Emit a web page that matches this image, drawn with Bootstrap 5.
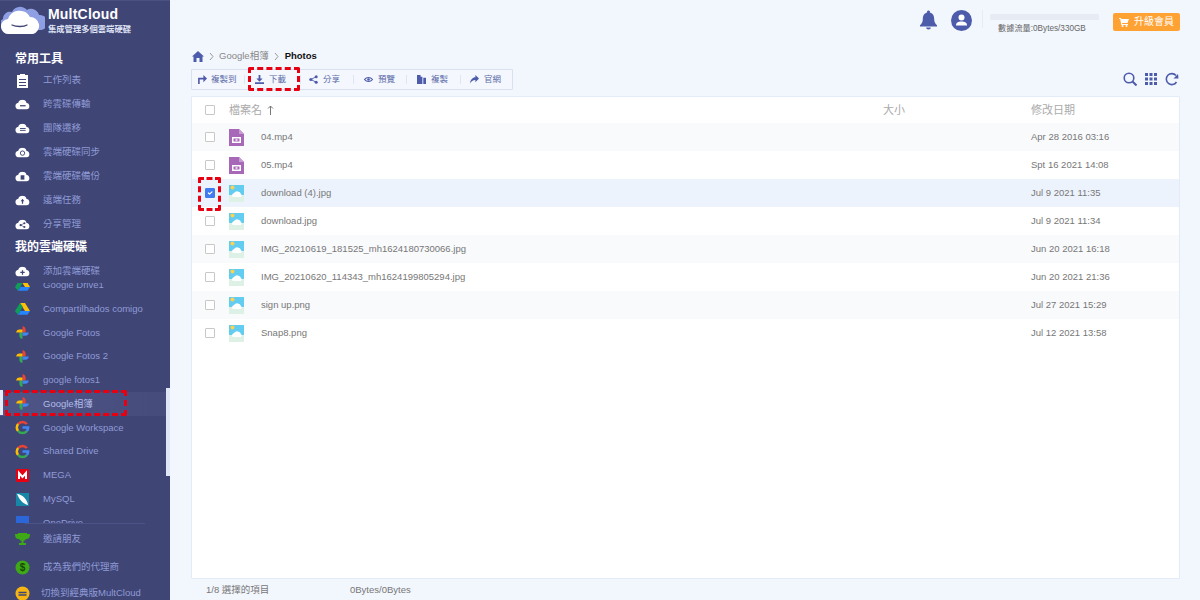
<!DOCTYPE html>
<html lang="zh-Hant">
<head>
<meta charset="utf-8">
<title>MultCloud</title>
<link href="https://cdn.jsdelivr.net/npm/bootstrap@5.3.0/dist/css/bootstrap.min.css" rel="stylesheet">
<style>
html,body{height:100%;overflow:hidden}
body{font-family:"Liberation Sans","Noto Sans CJK TC",sans-serif;background:#f2f6fd;font-size:9.5px;color:#666}
.shell{width:1200px;height:600px}
.side{width:170px;height:600px;overflow:hidden;background:#3f4575;color:#8f9bd6;flex:none;border-top:1px solid #4a5183}
.side>*{flex:none}
.brand{height:46px;padding:5px 0 0 1px;gap:3px}
.brand-name{font-size:14px;font-weight:700;color:#fff;line-height:17px;letter-spacing:.2px}
.brand-sub{font-size:8.3px;font-weight:700;color:#dfe3f5;line-height:11px;margin-top:1px;white-space:nowrap}
.side-head{font-size:12px;font-weight:700;color:#fff;padding-left:15px}
.head-a{height:21px;padding-top:3px;line-height:18px}
.head-b{height:23px;line-height:22px}
.side-item{height:24px;padding-left:15px;gap:13px;font-size:9.5px;line-height:24px;color:#8f9bd6;white-space:nowrap;position:relative}
.side-ico{width:15px;height:15px;flex:none;display:block}
.drives{height:240px;overflow:hidden;position:relative}
.drive-list{margin-top:-10px}
.drive-list .side-item{height:23.8px}
.item-on{background:linear-gradient(90deg,#4f5687,#454b7b);color:#b3bcea}
.edge-strip{position:absolute;left:0;top:107px;width:3px;height:25px;background:#e6ebf8;z-index:3}
.side-thumb{position:absolute;right:0;top:105px;width:4px;height:88px;background:#dfe6f7;z-index:3}
.side-sep{height:1px;background:#4c5487;margin:0 25px}
.side-foot{padding-top:1px}
.side-foot .side-item{height:28px;line-height:28px}
.side-foot .foot-last{height:20px;line-height:20px;padding-top:4px;gap:11px}
.main{flex:1;min-width:0;padding:0 20px 0 21px}
.topbar{height:42px;padding-top:10px;flex:none}
.bell{width:17px;height:20px;color:#4d5bab;margin-right:14px;flex:none}
.avatar{width:21px;height:21px;color:#4d5bab;margin-right:10px;flex:none}
.vsep{width:1px;height:18px;background:#e6ebf5;margin-right:7px}
.usage{width:109px;margin-right:14px;font-size:8.2px;line-height:11px;color:#666}
.usage-track{height:6px;background:#e7ecf4;margin:4px 0 3px;border-radius:1px}
.upgrade{width:67px;height:18px;background:#ffa234;color:#fff;font-size:10px;line-height:18px;border-radius:2px;gap:5px;margin-top:3px}
.crumbs{height:27px;flex:none;gap:5px;font-size:9.5px;color:#888;padding:2px 0 0 1px}
.crumbs b{color:#111;font-weight:700}
.crumb-last{margin-left:1px}
.tools-row{height:27px;flex:none;align-items:flex-start}
.tools{height:21px;width:322px;border:1px solid #d9e1f1;background:#f4f7fd;border-radius:1px}
.tool{height:19px;color:#5a6aa8;font-size:8.5px;line-height:19px;gap:5px;position:relative;white-space:nowrap}
.tool+.tool::before{content:"";position:absolute;left:0;top:5px;height:9px;width:1px;background:#dfe5f2}
.t1{width:52px;padding-left:6px;gap:4px}
.t2{width:56px;padding-left:11px}
.t3{width:53px;padding-left:9px}
.t4{width:53px;padding-left:11px}
.t5{width:54px;padding-left:11px}
.t6{width:52px;padding-left:10px}
.tool-ico{width:9px;height:9px;flex:none}
.view-ico{width:14px;height:14px;color:#4d5bab}
.view-set{gap:7px;margin-top:3px;padding-right:1px}
.panel{height:483px;flex:none;background:#fff;border:1px solid #e3eaf8;border-radius:1px}
.rowx{height:28px;align-items:center}
.rowx.zebra{background:#f9fafc}
.rowx.picked{background:#edf3fd}
.rowx.headx{height:26px;font-size:11px;color:#aaa}
.form-check-input.chk{width:10px;height:10px;border:1px solid #c8c8c8;background-color:#fff;margin:0 0 0 13px;flex:none;position:relative}
.form-check-input.chk[type=checkbox]{border-radius:1px}
.form-check-input.chk:checked{background-color:#3f7cf0;border-color:#3f7cf0}
.file-ico{width:15px;height:17px;flex:none;margin-left:14px}
.cell-size{width:148px;flex:none;font-size:11px;color:#aaa}
.cell-date{font-size:9.5px;color:#777;white-space:nowrap;padding-top:1px}
.headx .cell-date{font-size:11px;color:#aaa;padding-top:0}
.head-name{width:654px;flex:none;margin-left:14px;gap:5px}
.name-wide{width:639px;flex:none;font-size:9.5px;color:#777;padding:1px 0 0 17px;white-space:nowrap}
.statusx{height:21px;flex:none;font-size:9.5px;color:#777;line-height:21px;padding-left:15px}
.statusx span:first-child{width:144px}
.mark-box{position:absolute;border:3px dashed #e60012;border-radius:2px;z-index:5;pointer-events:none}
.mb-item{left:5px;top:-2px;width:122px;height:26px}
.mb-tool{left:4px;top:-3px;width:52px;height:24px}
.mb-chk{left:6px;top:-2px;width:23px;height:34px}
.rel{position:relative}
</style>
</head>
<body>
<svg width="0" height="0" class="position-absolute">
<defs>
<symbol id="cloud" viewBox="0 0 24 16"><path fill="#fff" d="M6 16A5.500 5.500 0 0 1 5.200 5.100 7 7 0 0 1 18.500 5.700 5.200 5.200 0 0 1 18.500 16Z"/></symbol>
<symbol id="photos" viewBox="0 0 24 24"><path fill="#ea4335" d="M12 2c3 0 5 2.200 5 5v5h-5Z"/><path fill="#4285f4" d="M22 12c0 3-2.200 5-5 5h-5v-5Z"/><path fill="#34a853" d="M12 22c-3 0-5-2.200-5-5v-5h5Z"/><path fill="#fbbc04" d="M2 12c0-3 2.200-5 5-5h5v5Z"/></symbol>
<symbol id="drive" viewBox="0 0 24 22"><path fill="#ffc107" d="M8 2h8l8 13h-8Z"/><path fill="#2684fc" d="M4.500 21 8.500 15H24l-4 6Z"/><path fill="#0f9d58" d="M8 2 0 15l4.500 6 8-13Z"/></symbol>
<symbol id="gg" viewBox="0 0 24 24"><path fill="none" stroke="#ea4335" stroke-width="4" d="M19 6.500A9 9 0 0 0 5 6.500"/><path fill="none" stroke="#fbbc04" stroke-width="4" d="M5 6.500a9 9 0 0 0 0 11"/><path fill="none" stroke="#34a853" stroke-width="4" d="M5 17.500a9 9 0 0 0 14 0"/><path fill="none" stroke="#4285f4" stroke-width="4" d="M19 17.500A9 9 0 0 0 21 12H12"/></symbol>
<symbol id="img" viewBox="0 0 15 17"><rect width="15" height="17" fill="#def1e6"/><path fill="#62cdf0" d="M0 0h15v10H0Z"/><circle cx="3.500" cy="2.500" r="2" fill="#fbd34e"/><path fill="#fff" d="M3 11a3 3 0 0 1 2-3 4 4 0 0 1 7 1 2 2 0 0 1 0 3H4Z"/><path fill="#def1e6" d="M0 12 15 13v4H0Z"/></symbol>
<symbol id="vid" viewBox="0 0 15 17"><path fill="#a868b8" d="M0 0h10l5 5v12H0Z"/><path fill="#c99bd4" d="M10 0l5 5h-5Z"/><rect x="3" y="8" width="9" height="6" fill="#fff"/><rect x="4.500" y="9.500" width="6" height="3" fill="#a868b8"/><rect x="6.500" y="10.300" width="2" height="1.400" fill="#fff"/></symbol>
<symbol id="chev" viewBox="0 0 5 9"><path fill="none" stroke="#999" d="M1 1l3 3.500L1 8"/></symbol>
</defs>
</svg>
<div class="shell d-flex">
  <aside class="side d-flex flex-column">
    <div class="brand d-flex">
      <svg width="44" height="30" viewBox="0 0 44 30" class="flex-none"><path fill="#8f9fe4" d="M3 24a6 6 0 0 1-1-11 7 7 0 0 1 9-7 9 9 0 0 1 15-2 8 8 0 0 1 12 5 7 7 0 0 1 2 15Z"/><path fill="#fff" d="M8 28a7.500 7.500 0 0 1-1-15A12 12 0 0 1 29 11a8.700 8.700 0 0 1 3 17Z"/><path fill="none" stroke="#3f4575" stroke-width="1.300" stroke-linecap="round" d="M11 19c4 2 12 2 15 0"/></svg>
      <div><div class="brand-name">MultCloud</div><div class="brand-sub">集成管理多個雲端硬碟</div></div>
    </div>
    <div class="side-head head-a">常用工具</div>
    <div class="side-item d-flex align-items-center"><svg class="side-ico" viewBox="0 0 15 15"><path fill="#fff" d="M2 2h3V1h5v1h3v13H2Zm2 4v1h7V6Zm0 3v1h7V9Zm0 3v1h7v-1Z"/></svg>工作列表</div>
    <div class="side-item d-flex align-items-center"><svg class="side-ico" viewBox="0 0 24 16"><use href="#cloud"/><path stroke="#3f4575" stroke-width="2" d="M8 10h9"/></svg>跨雲碟傳輸</div>
    <div class="side-item d-flex align-items-center"><svg class="side-ico" viewBox="0 0 24 16"><use href="#cloud"/><path stroke="#3f4575" stroke-width="1.500" d="M8 8h9M8 11h9"/></svg>團隊遷移</div>
    <div class="side-item d-flex align-items-center"><svg class="side-ico" viewBox="0 0 24 16"><use href="#cloud"/><circle cx="12" cy="9" r="3.500" fill="none" stroke="#3f4575" stroke-width="1.500"/></svg>雲端硬碟同步</div>
    <div class="side-item d-flex align-items-center"><svg class="side-ico" viewBox="0 0 24 16"><use href="#cloud"/><rect x="9" y="6" width="6" height="7" fill="#3f4575"/></svg>雲端硬碟備份</div>
    <div class="side-item d-flex align-items-center"><svg class="side-ico" viewBox="0 0 24 16"><use href="#cloud"/><path fill="#3f4575" d="M12 5l3 4h-2v4h-2V9H9Z"/></svg>遠端任務</div>
    <div class="side-item d-flex align-items-center"><svg class="side-ico" viewBox="0 0 24 16"><use href="#cloud"/><g fill="#3f4575"><circle cx="9" cy="9" r="1.700"/><circle cx="15" cy="6" r="1.700"/><circle cx="15" cy="12" r="1.700"/></g><path stroke="#3f4575" d="M15 6 9 9l6 3" fill="none"/></svg>分享管理</div>
    <div class="side-head head-b">我的雲端硬碟</div>
    <div class="side-item d-flex align-items-center"><svg class="side-ico" viewBox="0 0 24 16"><use href="#cloud"/><path stroke="#3f4575" stroke-width="2" d="M12 6v7M8.500 9.500h7"/></svg>添加雲端硬碟</div>
    <div class="drives">
      <div class="side-thumb"></div>
      <div class="edge-strip"></div>
      <div class="drive-list">
        <div class="side-item d-flex align-items-center"><svg class="side-ico"><use href="#drive"/></svg>Google Drive1</div>
        <div class="side-item d-flex align-items-center"><svg class="side-ico"><use href="#drive"/></svg>Compartilhados comigo</div>
        <div class="side-item d-flex align-items-center"><svg class="side-ico"><use href="#photos"/></svg>Google Fotos</div>
        <div class="side-item d-flex align-items-center"><svg class="side-ico"><use href="#photos"/></svg>Google Fotos 2</div>
        <div class="side-item d-flex align-items-center"><svg class="side-ico"><use href="#photos"/></svg>google fotos1</div>
        <div class="side-item item-on d-flex align-items-center"><svg class="side-ico"><use href="#photos"/></svg>Google相簿<span class="mark-box mb-item"></span></div>
        <div class="side-item d-flex align-items-center"><svg class="side-ico"><use href="#gg"/></svg>Google Workspace</div>
        <div class="side-item d-flex align-items-center"><svg class="side-ico"><use href="#gg"/></svg>Shared Drive</div>
        <div class="side-item d-flex align-items-center"><svg class="side-ico" viewBox="0 0 15 15"><rect width="13" height="13" x="1" y="1" rx="1" fill="#e60012"/><path fill="none" stroke="#fff" stroke-width="2" d="M4 11V5l3.500 4L11 5v6"/></svg>MEGA</div>
        <div class="side-item d-flex align-items-center"><svg class="side-ico" viewBox="0 0 15 15"><rect width="13" height="13" x="1" y="1" fill="#1787a8"/><path fill="#fff" d="M2 2c5 0 10 5 11 11C8 12 4 7 2 2Z"/></svg>MySQL</div>
        <div class="side-item d-flex align-items-center"><svg class="side-ico" viewBox="0 0 15 15"><rect width="13" height="13" x="1" y="1" fill="#2b67d8"/></svg>OneDrive</div>
      </div>
    </div>
    <div class="side-sep"></div>
    <div class="side-foot">
      <div class="side-item d-flex align-items-center"><svg class="side-ico" viewBox="0 0 15 15"><path fill="#3ea816" d="M3 1h9v1h3c0 3-1 5-4 5a4 4 0 0 1-2.500 2v2H11v2H4v-2h2.500V9A4 4 0 0 1 4 7C1 7 0 5 0 2h3Z"/></svg>邀請朋友</div>
      <div class="side-item d-flex align-items-center"><svg class="side-ico" viewBox="0 0 15 15"><circle cx="7.500" cy="7.500" r="7" fill="#3ea816"/><text x="7.500" y="11" font-size="10" font-weight="700" text-anchor="middle" fill="#17470a">$</text></svg>成為我們的代理商</div>
      <div class="side-item foot-last d-flex align-items-center"><svg class="side-ico" viewBox="0 0 15 15"><circle cx="7.500" cy="7.500" r="7" fill="#f7b512"/><path fill="none" stroke="#3f4575" stroke-width="1.500" d="M3.500 6.500h8M3.500 9h8"/></svg>切換到經典版MultCloud</div>
    </div>
  </aside>
  <main class="main d-flex flex-column">
    <div class="topbar d-flex justify-content-end align-items-start">
      <svg class="bell" viewBox="0 0 18 20"><path fill="currentColor" d="M9 0a1.500 1.500 0 0 1 1.500 2C14 3 15 6 15 9c0 3 1 5 3 6.500V17H0v-1.500C2 14 3 12 3 9c0-3 1-6 4.500-7A1.500 1.500 0 0 1 9 0ZM6.500 18h5a2.500 2 0 0 1-5 0Z"/></svg>
      <svg class="avatar" viewBox="0 0 21 21"><circle cx="10.500" cy="10.500" r="10.500" fill="currentColor"/><circle cx="10.500" cy="7.500" r="3" fill="#fff"/><path fill="#fff" d="M5 15.500c0-3 2-4 5.500-4s5.500 1 5.500 4Z"/></svg>
      <div class="vsep"></div>
      <div class="usage"><div class="usage-track"></div><div class="ps-2">數據流量:0Bytes/330GB</div></div>
      <div class="upgrade d-flex justify-content-center align-items-center"><svg width="10" height="10" viewBox="0 0 10 10"><path fill="#fff" d="M0 1h2l.4 1H10L8.500 6H3l.2 1H9v1H2.300L1.200 2H0Z"/><circle cx="3.500" cy="9" r="1" fill="#fff"/><circle cx="7.500" cy="9" r="1" fill="#fff"/></svg>升級會員</div>
    </div>
    <div class="crumbs d-flex align-items-center">
      <svg width="12" height="11" viewBox="0 0 12 11"><path fill="#4d5bab" d="M6 0l6 5.500h-1.500V11H7.500V7h-3v4H1.500V5.500H0Z"/></svg>
      <svg width="5" height="9"><use href="#chev"/></svg><span>Google相簿</span>
      <svg width="5" height="9"><use href="#chev"/></svg><b class="crumb-last">Photos</b>
    </div>
    <div class="tools-row d-flex justify-content-between">
      <div class="tools d-flex">
        <div class="tool t1 d-flex align-items-center"><svg class="tool-ico" viewBox="0 0 10 10"><path fill="none" stroke="#4d5bab" stroke-width="1.800" d="M1 10V4h6"/><path fill="#4d5bab" d="M6 0l4 4-4 4Z"/></svg>複製到</div>
        <div class="tool t2 d-flex align-items-center rel"><svg class="tool-ico" viewBox="0 0 10 10"><path fill="#4d5bab" d="M4 0h2v4h2.500L5 7.500 1.500 4H4ZM0 8h10v2H0Z"/></svg>下載<span class="mark-box mb-tool"></span></div>
        <div class="tool t3 d-flex align-items-center"><svg class="tool-ico" viewBox="0 0 10 10"><g fill="#4d5bab"><circle cx="2" cy="5" r="1.700"/><circle cx="8" cy="2" r="1.700"/><circle cx="8" cy="8" r="1.700"/></g><path stroke="#4d5bab" fill="none" d="M8 2 2 5l6 3"/></svg>分享</div>
        <div class="tool t4 d-flex align-items-center"><svg class="tool-ico" viewBox="0 0 10 10"><path fill="none" stroke="#4d5bab" stroke-width="1.300" d="M.5 5C3 2 7 2 9.500 5 7 8 3 8 .5 5Z"/><circle cx="5" cy="5" r="1.400" fill="#4d5bab"/></svg>預覽</div>
        <div class="tool t5 d-flex align-items-center"><svg class="tool-ico" viewBox="0 0 10 10"><path fill="#4d5bab" d="M0 0h4v2h2v8H0Zm7 3h3v7H7Z"/></svg>複製</div>
        <div class="tool t6 d-flex align-items-center"><svg class="tool-ico" viewBox="0 0 10 10"><path fill="#4d5bab" d="M6 0l4 4-4 4V5.500C3 5.500 1.500 7 0 9.500 .5 5 3 2.500 6 2.500Z"/></svg>官網</div>
      </div>
      <div class="view-set d-flex">
        <svg class="view-ico" viewBox="0 0 14 14"><circle cx="6" cy="6" r="4.800" fill="none" stroke="currentColor" stroke-width="1.600"/><path stroke="currentColor" stroke-width="2" d="M9.500 9.500 13.500 13.500"/></svg>
        <svg class="view-ico" viewBox="0 0 14 14"><g fill="currentColor"><rect x="1" y="1" width="3" height="3"/><rect x="5.500" y="1" width="3" height="3"/><rect x="10" y="1" width="3" height="3"/><rect x="1" y="5.500" width="3" height="3"/><rect x="5.500" y="5.500" width="3" height="3"/><rect x="10" y="5.500" width="3" height="3"/><rect x="1" y="10" width="3" height="3"/><rect x="5.500" y="10" width="3" height="3"/><rect x="10" y="10" width="3" height="3"/></g></svg>
        <svg class="view-ico" viewBox="0 0 14 14"><path fill="none" stroke="currentColor" stroke-width="1.600" d="M11.500 10A5.500 5.500 0 1 1 11 3.500"/><path fill="currentColor" d="M13.500 6.500H8.500L13 2Z"/></svg>
      </div>
    </div>
    <section class="panel">
      <div class="rowx headx d-flex"><input class="form-check-input chk" type="checkbox" aria-label="all"><div class="head-name d-flex align-items-center">檔案名<svg width="7" height="10" viewBox="0 0 7 10"><path fill="none" stroke="#777" d="M3.500 10V1M1 3.500 3.500 1 6 3.500"/></svg></div><div class="cell-size">大小</div><div class="cell-date">修改日期</div></div>
      <div class="rowx zebra d-flex"><input class="form-check-input chk" type="checkbox" aria-label="row"><svg class="file-ico"><use href="#vid"/></svg><div class="name-wide">04.mp4</div><div class="cell-size"></div><div class="cell-date">Apr 28 2016 03:16</div></div>
      <div class="rowx d-flex"><input class="form-check-input chk" type="checkbox" aria-label="row"><svg class="file-ico"><use href="#vid"/></svg><div class="name-wide">05.mp4</div><div class="cell-size"></div><div class="cell-date">Spt 16 2021 14:08</div></div>
      <div class="rowx picked d-flex rel"><span class="mark-box mb-chk"></span><input class="form-check-input chk" type="checkbox" checked aria-label="row"><svg class="file-ico"><use href="#img"/></svg><div class="name-wide">download (4).jpg</div><div class="cell-size"></div><div class="cell-date">Jul 9 2021 11:35</div></div>
      <div class="rowx d-flex"><input class="form-check-input chk" type="checkbox" aria-label="row"><svg class="file-ico"><use href="#img"/></svg><div class="name-wide">download.jpg</div><div class="cell-size"></div><div class="cell-date">Jul 9 2021 11:34</div></div>
      <div class="rowx zebra d-flex"><input class="form-check-input chk" type="checkbox" aria-label="row"><svg class="file-ico"><use href="#img"/></svg><div class="name-wide">IMG_20210619_181525_mh1624180730066.jpg</div><div class="cell-size"></div><div class="cell-date">Jun 20 2021 16:18</div></div>
      <div class="rowx d-flex"><input class="form-check-input chk" type="checkbox" aria-label="row"><svg class="file-ico"><use href="#img"/></svg><div class="name-wide">IMG_20210620_114343_mh1624199805294.jpg</div><div class="cell-size"></div><div class="cell-date">Jun 20 2021 21:36</div></div>
      <div class="rowx zebra d-flex"><input class="form-check-input chk" type="checkbox" aria-label="row"><svg class="file-ico"><use href="#img"/></svg><div class="name-wide">sign up.png</div><div class="cell-size"></div><div class="cell-date">Jul 27 2021 15:29</div></div>
      <div class="rowx d-flex"><input class="form-check-input chk" type="checkbox" aria-label="row"><svg class="file-ico"><use href="#img"/></svg><div class="name-wide">Snap8.png</div><div class="cell-size"></div><div class="cell-date">Jul 12 2021 13:58</div></div>
    </section>
    <div class="statusx d-flex"><span>1/8 選擇的項目</span><span>0Bytes/0Bytes</span></div>
  </main>
</div>
<script src="https://cdn.jsdelivr.net/npm/bootstrap@5.3.0/dist/js/bootstrap.bundle.min.js"></script>
</body>
</html>
